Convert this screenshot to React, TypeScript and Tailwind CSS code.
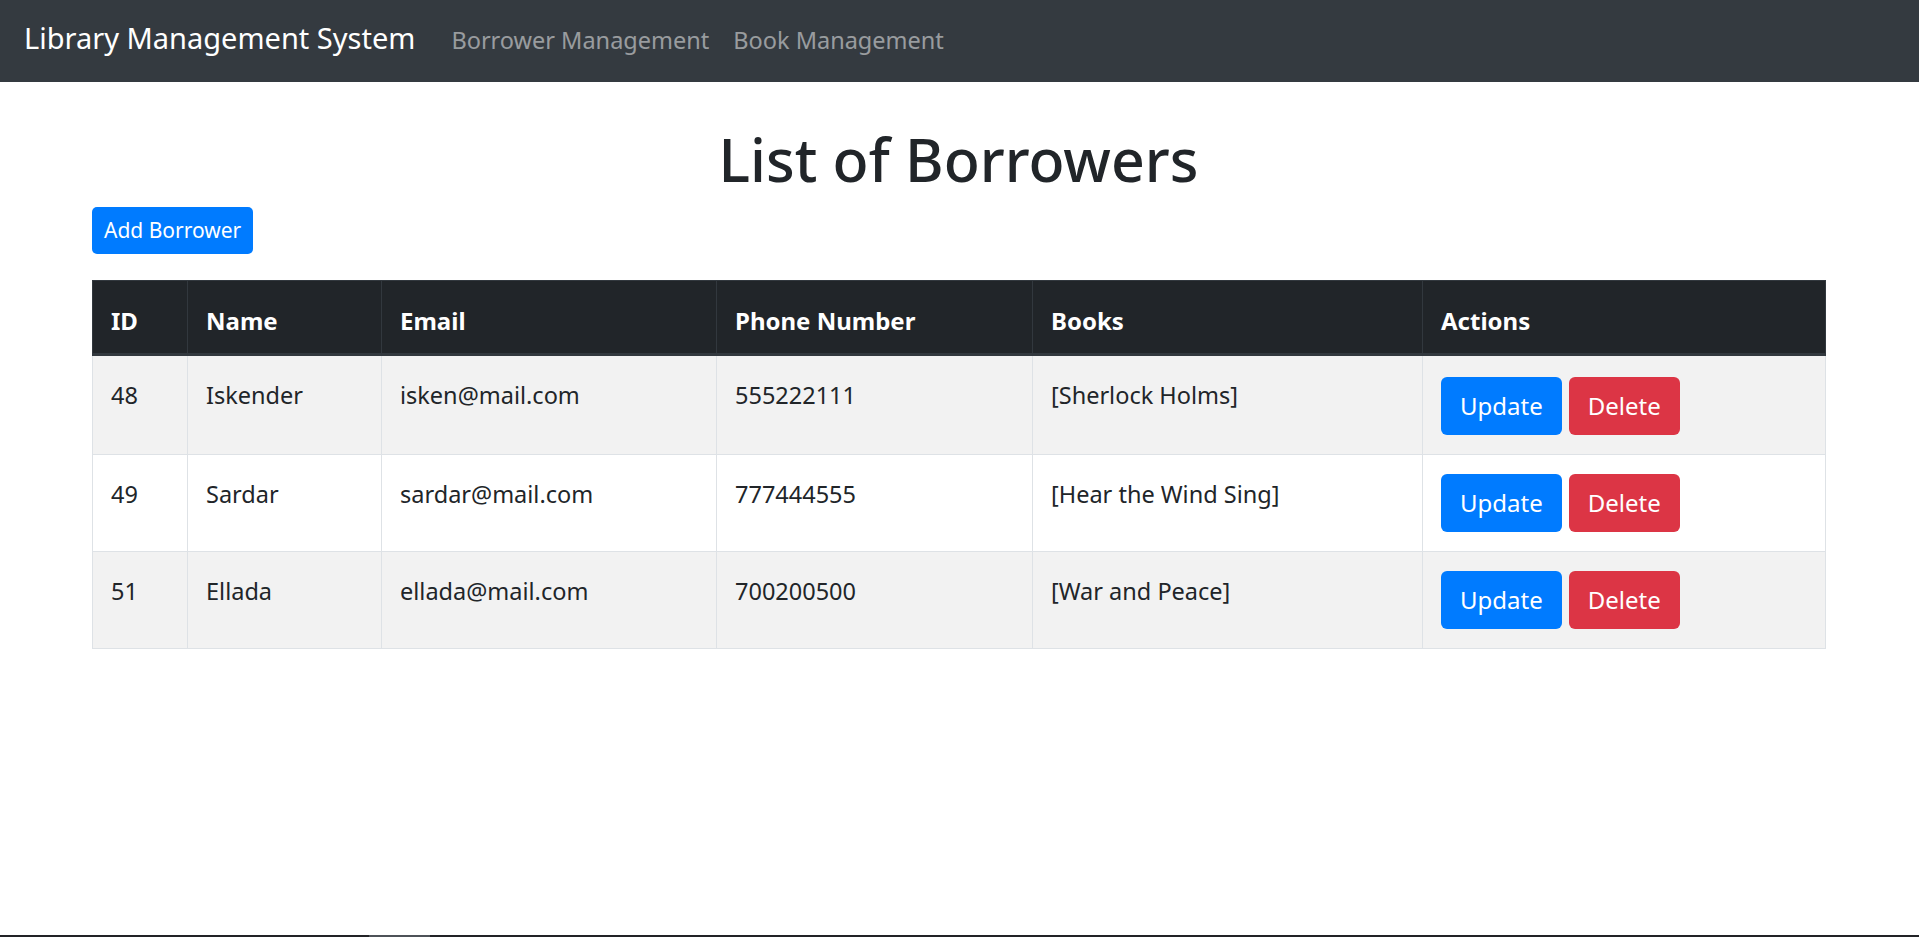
import React from "react";

const borrowers = [
  { id: 48, name: "Iskender", email: "isken@mail.com", phone: "555222111", books: "[Sherlock Holms]" },
  { id: 49, name: "Sardar", email: "sardar@mail.com", phone: "777444555", books: "[Hear the Wind Sing]" },
  { id: 51, name: "Ellada", email: "ellada@mail.com", phone: "700200500", books: "[War and Peace]" },
];

const columns = ["ID", "Name", "Email", "Phone Number", "Books", "Actions"];

export default function App() {
  return (
    <div
      className="flex h-[937px] flex-col bg-white text-[#212529]"
      style={{ fontFamily: '"Noto Sans", "Open Sans", sans-serif' }}
    >
      <nav className="flex h-[82px] shrink-0 items-baseline bg-[#343a40] px-[24px] pt-[15px]">
        <span className="mr-[24px] text-[29px] leading-[45px] text-white">Library Management System</span>
        <a className="px-[12px] text-[23.5px] leading-[36px] text-white/50">Borrower Management</a>
        <a className="px-[12px] text-[23.5px] leading-[36px] text-white/50">Book Management</a>
      </nav>

      <div className="ml-[92px] w-[1733px]">
        <h1 className="mt-[41px] mb-[12px] text-center text-[59px] font-medium leading-[72px]">List of Borrowers</h1>
        <button className="flex h-[47px] items-center rounded-[5px] bg-[#007bff] px-[12px] text-[21px] text-white">
          Add Borrower
        </button>

        <table className="mt-[26px] w-full table-fixed border-collapse text-[23.5px] leading-[36px]">
          <colgroup>
            <col className="w-[95px]" />
            <col className="w-[194px]" />
            <col className="w-[335px]" />
            <col className="w-[316px]" />
            <col className="w-[390px]" />
            <col className="w-[403px]" />
          </colgroup>
          <thead>
            <tr>
              {columns.map((c) => (
                <th
                  key={c}
                  className="border border-b-[3px] border-[#32383e] bg-[#212529] px-[18px] pt-[22px] pb-[14px] text-left align-top text-[24px] font-bold text-white"
                >
                  {c}
                </th>
              ))}
            </tr>
          </thead>
          <tbody>
            {borrowers.map((b, i) => (
              <tr key={b.id} className={i % 2 === 0 ? "bg-[#f2f2f2]" : "bg-white"}>
                <td className="border border-[#dee2e6] px-[18px] pt-[21px] pb-[18px] align-top">{b.id}</td>
                <td className="border border-[#dee2e6] px-[18px] pt-[21px] pb-[18px] align-top">{b.name}</td>
                <td className="border border-[#dee2e6] px-[18px] pt-[21px] pb-[18px] align-top">{b.email}</td>
                <td className="border border-[#dee2e6] px-[18px] pt-[21px] pb-[18px] align-top">{b.phone}</td>
                <td className="border border-[#dee2e6] px-[18px] pt-[21px] pb-[18px] align-top">{b.books}</td>
                <td
                  className={
                    i === 0
                      ? "border border-[#dee2e6] px-[18px] pt-[21px] pb-[19px] align-top"
                      : "border border-[#dee2e6] px-[18px] pt-[19px] pb-[19px] align-top"
                  }
                >
                  <div className="flex gap-[7px]">
                    <button className="h-[58px] rounded-[6px] bg-[#007bff] px-[19px] text-[24px] text-white">Update</button>
                    <button className="h-[58px] rounded-[6px] bg-[#dc3545] px-[19px] text-[24px] text-white">Delete</button>
                  </div>
                </td>
              </tr>
            ))}
          </tbody>
        </table>
      </div>

      <div className="flex-1" />
      <div className="flex h-[2px] shrink-0 bg-[#222326]">
        <div className="ml-[369px] w-[61px] bg-[#4e5258]" />
      </div>
    </div>
  );
}
